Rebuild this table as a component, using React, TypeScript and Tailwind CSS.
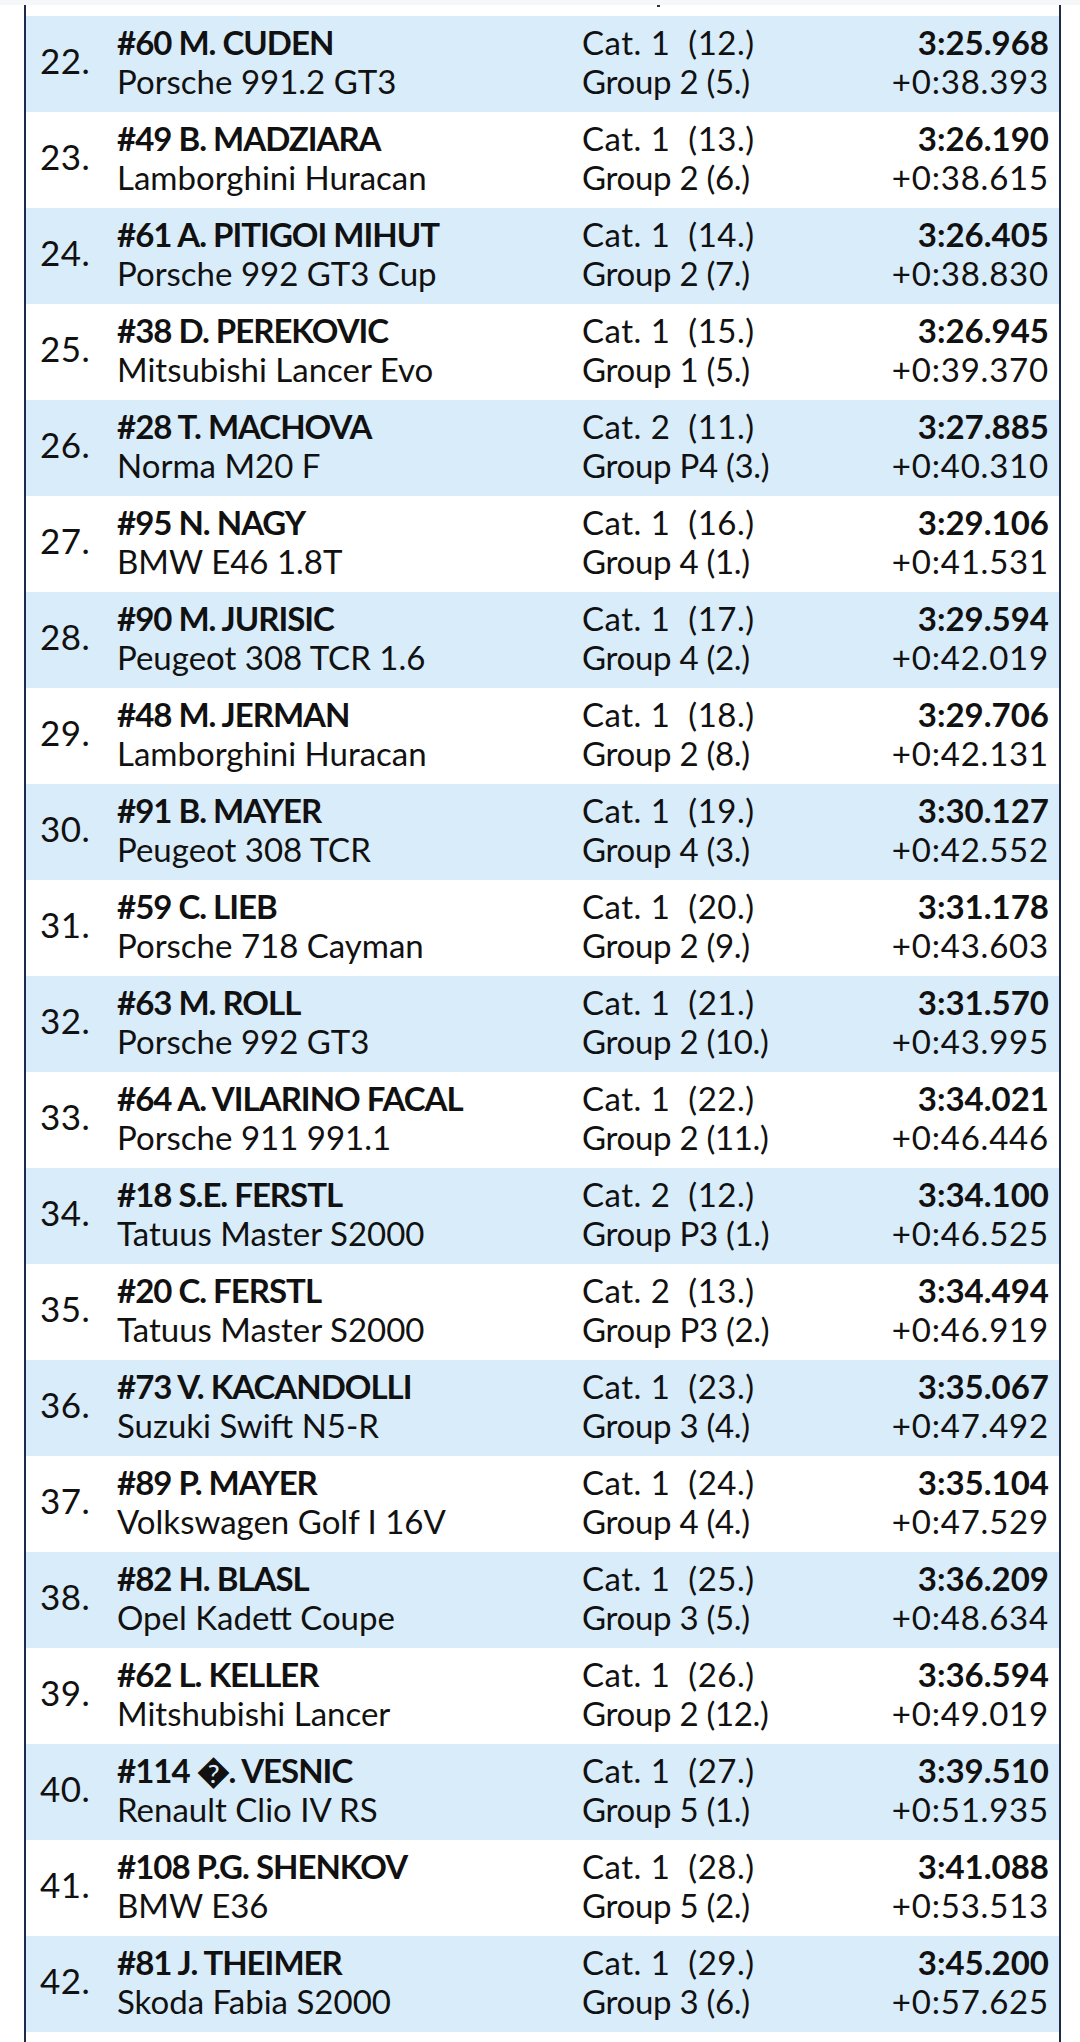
type Result = {
  pos: number;
  driver: string;
  car: string;
  cat: string;
  group: string;
  time: string;
  gap: string;
};

const results: Result[] = [
  { pos: 22, driver: "#60 M. CUDEN", car: "Porsche 991.2 GT3", cat: "Cat. 1  (12.)", group: "Group 2 (5.)", time: "3:25.968", gap: "+0:38.393" },
  { pos: 23, driver: "#49 B. MADZIARA", car: "Lamborghini Huracan", cat: "Cat. 1  (13.)", group: "Group 2 (6.)", time: "3:26.190", gap: "+0:38.615" },
  { pos: 24, driver: "#61 A. PITIGOI MIHUT", car: "Porsche 992 GT3 Cup", cat: "Cat. 1  (14.)", group: "Group 2 (7.)", time: "3:26.405", gap: "+0:38.830" },
  { pos: 25, driver: "#38 D. PEREKOVIC", car: "Mitsubishi Lancer Evo", cat: "Cat. 1  (15.)", group: "Group 1 (5.)", time: "3:26.945", gap: "+0:39.370" },
  { pos: 26, driver: "#28 T. MACHOVA", car: "Norma M20 F", cat: "Cat. 2  (11.)", group: "Group P4 (3.)", time: "3:27.885", gap: "+0:40.310" },
  { pos: 27, driver: "#95 N. NAGY", car: "BMW E46 1.8T", cat: "Cat. 1  (16.)", group: "Group 4 (1.)", time: "3:29.106", gap: "+0:41.531" },
  { pos: 28, driver: "#90 M. JURISIC", car: "Peugeot 308 TCR 1.6", cat: "Cat. 1  (17.)", group: "Group 4 (2.)", time: "3:29.594", gap: "+0:42.019" },
  { pos: 29, driver: "#48 M. JERMAN", car: "Lamborghini Huracan", cat: "Cat. 1  (18.)", group: "Group 2 (8.)", time: "3:29.706", gap: "+0:42.131" },
  { pos: 30, driver: "#91 B. MAYER", car: "Peugeot 308 TCR", cat: "Cat. 1  (19.)", group: "Group 4 (3.)", time: "3:30.127", gap: "+0:42.552" },
  { pos: 31, driver: "#59 C. LIEB", car: "Porsche 718 Cayman", cat: "Cat. 1  (20.)", group: "Group 2 (9.)", time: "3:31.178", gap: "+0:43.603" },
  { pos: 32, driver: "#63 M. ROLL", car: "Porsche 992 GT3", cat: "Cat. 1  (21.)", group: "Group 2 (10.)", time: "3:31.570", gap: "+0:43.995" },
  { pos: 33, driver: "#64 A. VILARINO FACAL", car: "Porsche 911 991.1", cat: "Cat. 1  (22.)", group: "Group 2 (11.)", time: "3:34.021", gap: "+0:46.446" },
  { pos: 34, driver: "#18 S.E. FERSTL", car: "Tatuus Master S2000", cat: "Cat. 2  (12.)", group: "Group P3 (1.)", time: "3:34.100", gap: "+0:46.525" },
  { pos: 35, driver: "#20 C. FERSTL", car: "Tatuus Master S2000", cat: "Cat. 2  (13.)", group: "Group P3 (2.)", time: "3:34.494", gap: "+0:46.919" },
  { pos: 36, driver: "#73 V. KACANDOLLI", car: "Suzuki Swift N5-R", cat: "Cat. 1  (23.)", group: "Group 3 (4.)", time: "3:35.067", gap: "+0:47.492" },
  { pos: 37, driver: "#89 P. MAYER", car: "Volkswagen Golf I 16V", cat: "Cat. 1  (24.)", group: "Group 4 (4.)", time: "3:35.104", gap: "+0:47.529" },
  { pos: 38, driver: "#82 H. BLASL", car: "Opel Kadett Coupe", cat: "Cat. 1  (25.)", group: "Group 3 (5.)", time: "3:36.209", gap: "+0:48.634" },
  { pos: 39, driver: "#62 L. KELLER", car: "Mitshubishi Lancer", cat: "Cat. 1  (26.)", group: "Group 2 (12.)", time: "3:36.594", gap: "+0:49.019" },
  { pos: 40, driver: "#114 \uFFFD. VESNIC", car: "Renault Clio IV RS", cat: "Cat. 1  (27.)", group: "Group 5 (1.)", time: "3:39.510", gap: "+0:51.935" },
  { pos: 41, driver: "#108 P.G. SHENKOV", car: "BMW E36", cat: "Cat. 1  (28.)", group: "Group 5 (2.)", time: "3:41.088", gap: "+0:53.513" },
  { pos: 42, driver: "#81 J. THEIMER", car: "Skoda Fabia S2000", cat: "Cat. 1  (29.)", group: "Group 3 (6.)", time: "3:45.200", gap: "+0:57.625" },
];

function ResultRow({ r, shaded }: { r: Result; shaded: boolean }) {
  return (
    <div className={`flex items-center h-[96px] pl-[14px] pr-[10px] ${shaded ? "bg-[#d9ecfa]" : "bg-white"}`}>
      <div className="w-[77px] shrink-0 pb-[8px] text-[35px] tracking-[0.5px]">{r.pos}.</div>
      <div className="w-[465px] shrink-0 pt-[2px] pb-[6px]">
        <div className="font-bold tracking-[-1px]">{r.driver}</div>
        <div>{r.car}</div>
      </div>
      <div className="flex-1 whitespace-pre pt-[2px] pb-[6px]">
        <div className="tracking-[0.5px]">{r.cat}</div>
        <div className="tracking-[-0.3px]">{r.group}</div>
      </div>
      <div className="text-right pt-[2px] pb-[6px]">
        <div className="font-bold">{r.time}</div>
        <div className="tracking-[0.8px]">{r.gap}</div>
      </div>
    </div>
  );
}

export default function App() {
  return (
    <div className="min-h-[2042px] bg-white text-[#111] text-[33px] leading-[39px] font-['Lato',sans-serif]">
      <div className="h-[5px] bg-[#f6f7f9]" />
      <div className="ml-[24px] w-[1037px] min-h-[2037px] border-x-2 border-[#1d2b4a]">
        <div className="h-[11px] relative">
          <span className="absolute left-[631px] top-0 w-[3px] h-[2px] bg-[#333]" />
        </div>
        {results.map((r, i) => (
          <ResultRow key={r.pos} r={r} shaded={i % 2 === 0} />
        ))}
      </div>
    </div>
  );
}
